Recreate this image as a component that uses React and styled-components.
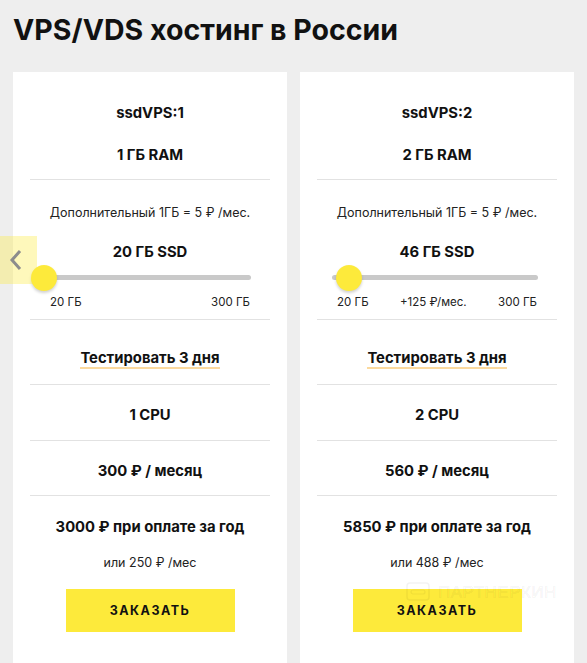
import React from "react";
import styled, { createGlobalStyle } from "styled-components";

const Global = createGlobalStyle`
  html, body { margin: 0; padding: 0; background: #eeeeee; }
  body { font-family: Inter, Roboto, "Noto Sans", "DejaVu Sans", sans-serif; color: #111; overflow: hidden; }
  * { box-sizing: border-box; }
`;

const Page = styled.div`
  position: relative;
  width: 587px;
  height: 663px;
  padding: 0 13px;
  overflow: hidden;
`;

const Title = styled.h1`
  margin: 0;
  padding-top: 13px;
  height: 72px;
  font-size: 28.5px;
  line-height: 34px;
  font-weight: 700;
  letter-spacing: 0;
  color: #111;
`;

const Cards = styled.div`
  display: flex;
  gap: 13px;
`;

const Card = styled.div`
  width: 275px;
  height: 600px;
  background: #fff;
  padding: 0 17px;
  display: flex;
  flex-direction: column;
`;

const Section = styled.div`
  display: flex;
  flex-direction: column;
  align-items: center;
  padding: ${(p) => p.$pad || "0"};
  border-bottom: ${(p) => (p.$divided ? "1px solid #e2e2e2" : "none")};
`;

const Bold = styled.div`
  font-size: 14.8px;
  line-height: 20px;
  font-weight: 700;
  margin-top: ${(p) => p.$mt || "0"};
`;

const Small = styled.div`
  font-size: 12.5px;
  line-height: 20px;
  color: #222;
  margin-top: ${(p) => p.$mt || "0"};
`;

const TestLink = styled.div`
  font-size: 14.8px;
  line-height: 18px;
  font-weight: 700;
  border-bottom: 2px solid #fbd99e;
`;

const Slider = styled.div`
  position: relative;
  align-self: stretch;
  height: 26px;
  margin-top: 3px;
`;

const Track = styled.div`
  position: absolute;
  left: 15px;
  right: 19px;
  top: 10px;
  height: 5px;
  border-radius: 3px;
  background: #c9c9c9;
`;

const Thumb = styled.div`
  position: absolute;
  top: 0;
  width: 26px;
  height: 26px;
  border-radius: 50%;
  background: #fdea3b;
  box-shadow: 0 2px 3px rgba(0, 0, 0, 0.18);
`;

const Labels = styled.div`
  align-self: stretch;
  display: flex;
  justify-content: space-between;
  padding: 0 20px;
  margin-top: 3px;
  font-size: 11.5px;
  line-height: 16px;
  color: #222;
`;

const Button = styled.button`
  margin-top: 16px;
  width: 169px;
  height: 43px;
  border: none;
  background: #fdea3b;
  font-family: inherit;
  font-size: 12.5px;
  font-weight: 700;
  letter-spacing: 1.5px;
  color: #111;
  cursor: pointer;
`;

const PrevArrow = styled.div`
  position: absolute;
  left: 0;
  top: 236px;
  width: 37px;
  height: 48px;
  background: rgba(253, 235, 59, 0.35);
  display: flex;
  align-items: center;
  justify-content: flex-start;
  padding-left: 9px;
`;

const Watermark = styled.div`
  position: absolute;
  left: 406px;
  top: 582px;
  display: flex;
  align-items: center;
  gap: 8px;
  pointer-events: none;
`;

const WatermarkText = styled.span`
  font-family: "Liberation Sans", Arial, sans-serif;
  font-size: 17px;
  letter-spacing: 0.5px;
  color: transparent;
  -webkit-text-stroke: 1px rgba(0, 0, 0, 0.05);
`;

const plans = [
  { name: "ssdVPS:1", ram: "1 ГБ RAM", ssd: 20, cpu: "1 CPU", month: "300 ₽ / месяц", year: "3000 ₽ при оплате за год", per: "или 250 ₽ /мес", extra: null },
  { name: "ssdVPS:2", ram: "2 ГБ RAM", ssd: 46, cpu: "2 CPU", month: "560 ₽ / месяц", year: "5850 ₽ при оплате за год", per: "или 488 ₽ /мес", extra: "+125 ₽/мес." },
];

function PlanCard({ plan }) {
  const frac = (plan.ssd - 20) / 280;
  const left = 1 + frac * 193;
  return (
    <Card>
      <Section $divided $pad="31px 0 14px">
        <Bold>{plan.name}</Bold>
        <Bold $mt="22px">{plan.ram}</Bold>
      </Section>
      <Section $divided $pad="23px 0 9px">
        <Small>Дополнительный 1ГБ = 5 ₽ /мес.</Small>
        <Bold $mt="19px">{plan.ssd} ГБ SSD</Bold>
        <Slider>
          <Track />
          <Thumb style={{ left: `${left}px` }} />
        </Slider>
        <Labels>
          <span>20 ГБ</span>
          {plan.extra && <span>{plan.extra}</span>}
          <span>300 ГБ</span>
        </Labels>
      </Section>
      <Section $divided $pad="29px 0 15px">
        <TestLink>Тестировать 3 дня</TestLink>
      </Section>
      <Section $divided $pad="20px 0 15px">
        <Bold>{plan.cpu}</Bold>
      </Section>
      <Section $divided $pad="20px 0 14px">
        <Bold>{plan.month}</Bold>
      </Section>
      <Section $pad="21px 0 0">
        <Bold>{plan.year}</Bold>
        <Small $mt="16px">{plan.per}</Small>
        <Button>ЗАКАЗАТЬ</Button>
      </Section>
    </Card>
  );
}

export default function App() {
  return (
    <Page>
      <Global />
      <Title>VPS/VDS хостинг в России</Title>
      <Cards>
        {plans.map((p) => (
          <PlanCard key={p.name} plan={p} />
        ))}
      </Cards>
      <PrevArrow>
        <svg width="14" height="22" viewBox="0 0 14 22">
          <path d="M11 2 L3 11 L11 20" fill="none" stroke="#8c8c8c" strokeWidth="3" />
        </svg>
      </PrevArrow>
      <Watermark>
        <svg width="24" height="22" viewBox="0 0 24 22">
          <rect x="1" y="1" width="22" height="17" rx="3" fill="none" stroke="rgba(0,0,0,0.05)" strokeWidth="1.5" />
          <rect x="5" y="8" width="14" height="4" rx="2" fill="none" stroke="rgba(0,0,0,0.05)" strokeWidth="1.2" />
        </svg>
        <WatermarkText>ПАРТНЕРКИН</WatermarkText>
      </Watermark>
    </Page>
  );
}
